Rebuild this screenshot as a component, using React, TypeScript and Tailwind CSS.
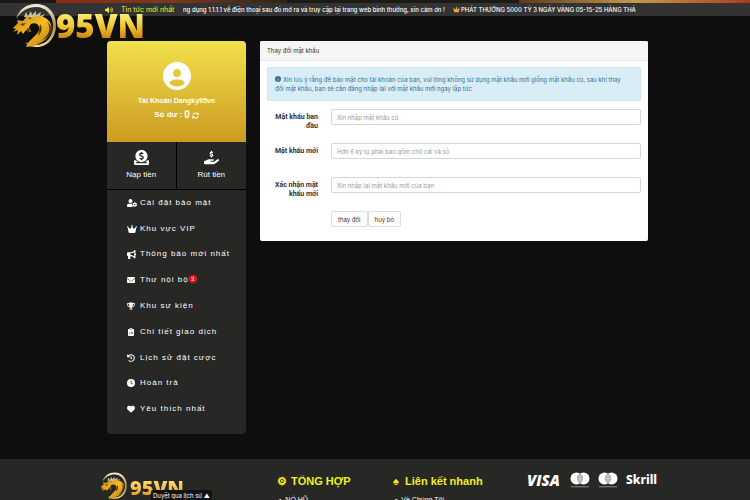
import type { ReactNode } from 'react';
import {
  FaArrowsRotate,
  FaBullhorn,
  FaCircleInfo,
  FaCircleUser,
  FaClipboardList,
  FaClock,
  FaCrown,
  FaEnvelope,
  FaHandHoldingDollar,
  FaHeart,
  FaTrophy,
  FaVolumeHigh,
} from 'react-icons/fa6';
import { FaDonate, FaHistory, FaUserCog } from 'react-icons/fa';

interface MenuItem {
  label: string;
  icon: ReactNode;
  badge?: number;
}

const menuItems: MenuItem[] = [
  { label: 'Cài đặt bảo mật', icon: <FaUserCog size={10} /> },
  { label: 'Khu vực VIP', icon: <FaCrown size={10} /> },
  { label: 'Thông báo mới nhất', icon: <FaBullhorn size={9} /> },
  { label: 'Thư nội bộ', icon: <FaEnvelope size={8} />, badge: 3 },
  { label: 'Khu sự kiện', icon: <FaTrophy size={8} /> },
  { label: 'Chi tiết giao dịch', icon: <FaClipboardList size={8} /> },
  { label: 'Lịch sử đặt cược', icon: <FaHistory size={8} /> },
  { label: 'Hoàn trả', icon: <FaClock size={8} /> },
  { label: 'Yêu thích nhất', icon: <FaHeart size={8} /> },
];

const fields = [
  { id: 'old-password', label: 'Mật khẩu ban đầu', placeholder: 'Xin nhập mật khẩu cũ' },
  { id: 'new-password', label: 'Mật khẩu mới', placeholder: 'Hơn 6 ký tự phải bao gồm chữ cái và số' },
  { id: 'confirm-password', label: 'Xác nhận mật khẩu mới', placeholder: 'Xin nhập lại mật khẩu mới của bạn' },
];

function DragonMark({ id, className }: { id: string; className: string }) {
  return (
    <svg viewBox="0 0 46 46" className={className} aria-hidden="true">
      <defs>
        <linearGradient id={`${id}-ring`} x1="0" y1="0" x2="0" y2="1">
          <stop offset="0" stopColor="#f4f0e2" />
          <stop offset="0.5" stopColor="#a98d4c" />
          <stop offset="1" stopColor="#f3dd9a" />
        </linearGradient>
        <linearGradient id={`${id}-body`} x1="0" y1="0" x2="1" y2="1">
          <stop offset="0" stopColor="#c98a1a" />
          <stop offset="0.5" stopColor="#f5bd22" />
          <stop offset="1" stopColor="#b87410" />
        </linearGradient>
      </defs>
      {/* crescent ring, thicker on the right */}
      <path
        d="M4 16C7 6 15 1 24 1c12 0 20 9 20 21s-8 22-19 22c-5 0-9-1-12-5 3 2 6 3 10 3 11 0 18-8 18-19S34 4 24 4C16 4 9 8 4 16z"
        fill={`url(#${id}-ring)`}
      />
      {/* horns and mane */}
      <path d="M12 14l2-5 2 4 3-5 1 4 4-4v4l5-3-1 4 5-2-4 5-8-1z" fill="#c9bf9f" />
      {/* head, back and tail */}
      <path
        d="M1 25l5-5-1-3 6 1 4-5 3 3c5-4 12-4 17 0 6 5 6 12 1 18-3 4-8 6-14 9l-8 1c2-7 11-11 13-17 1-5-3-8-8-6l-2 3 2 5-5-2-3 4-2-3-4 4 1-5-5 2 3-3z"
        fill={`url(#${id}-body)`}
      />
      <path d="M8 21l6-1-3 3zM15 25l4 1-4 4zM28 21c3 4 2 8-2 12z" fill="#5c3d0a" />
      <path d="M35 19c5 6 2 13-5 18 11-4 13-12 5-18z" fill="#4b330c" />
    </svg>
  );
}

function Mastercard() {
  return (
    <svg viewBox="0 0 20 16" className="h-4 w-5 shrink-0" role="img" aria-label="Mastercard">
      <circle cx="6.5" cy="6.5" r="6" fill="#fff" />
      <circle cx="13.5" cy="6.5" r="6" fill="#fff" />
      <path d="M10 1.6a6 6 0 0 1 0 9.8a6 6 0 0 1 0-9.8z" fill="#c4c4c1" stroke="#777774" strokeWidth=".6" />
      <path d="M1 14.8h18" stroke="#8a8a87" />
    </svg>
  );
}

function NewsBar() {
  return (
    <div className="flex h-[13px] shrink-0 items-center overflow-hidden bg-[#333] pr-[94px] pl-[105px] leading-[11px] whitespace-nowrap">
      <FaVolumeHigh size={8} className="shrink-0 text-[#e8e82a]" />
      <span className="ml-2 w-[62px] shrink-0 font-[Inter] text-[7px] text-[#f0ee20]">Tin tức mới nhất</span>
      <div className="flex min-w-0 flex-1 items-center gap-2 overflow-hidden font-[Inter] text-[6px] font-medium text-white">
        <span>ng dụng 1.1.1.1 về điện thoại sau đó mở ra và truy cập lại trang web bình thường, xin cảm ơn !</span>
        <span className="flex items-center">
          <FaCrown size={7} className="mr-px shrink-0 text-[#f0a445]" />
          PHÁT THƯỞNG 5000 TỶ 3 NGÀY VÀNG 05-15-25 HÀNG THÁ
        </span>
      </div>
    </div>
  );
}

function Sidebar() {
  return (
    <aside className="w-[139px] shrink-0 overflow-hidden rounded-[4px] bg-[#272725] text-white">
      <div className="flex h-[101px] flex-col items-center bg-linear-to-b from-[#f1e14c] to-[#cb9b1f] pt-[21px]">
        <FaCircleUser size={28} />
        <p className="mt-1.5 text-[7px] leading-[9px] font-bold">Tài Khoản Dangky95vn</p>
        <p className="mt-1 flex items-center gap-0.5 text-[8px] leading-3 font-bold">
          Số dư : <span className="text-[10px]">0</span>
          <button type="button" aria-label="Làm mới">
            <FaArrowsRotate size={7} />
          </button>
        </p>
      </div>
      <div className="grid h-12 grid-cols-2 border-b border-black text-[8px]">
        <a href="#deposit" className="flex flex-col items-center border-r border-black pt-2 leading-3">
          <FaDonate size={15} />
          <span className="mt-1">Nạp tiền</span>
        </a>
        <a href="#withdraw" className="flex flex-col items-center pt-2 leading-3">
          <FaHandHoldingDollar size={15} />
          <span className="mt-1">Rút tiền</span>
        </a>
      </div>
      <ul className="mb-3 flex h-[232px] flex-col pl-5 text-[8px] tracking-[1px]">
        {menuItems.map((item) => (
          <li key={item.label} className="flex flex-1 items-center">
            <a href="#menu" className="flex items-center whitespace-nowrap">
              <span className="flex w-[13px] shrink-0">{item.icon}</span>
              {item.label}
            </a>
            {item.badge && (
              <span className="mb-0.5 flex size-2 items-center justify-center rounded-full bg-[#ee1111] text-[6px] tracking-normal">
                {item.badge}
              </span>
            )}
          </li>
        ))}
      </ul>
    </aside>
  );
}

function PasswordPanel() {
  return (
    <section className="min-w-0 flex-1 overflow-hidden rounded-[2px] bg-white font-[Inter] text-[6px] leading-[9px] text-[#333]">
      <h1 className="flex h-5 items-center border-b border-[#e6e6e6] bg-[#f5f5f5] px-[7px]">Thay đổi mật khẩu</h1>
      <div className="px-[7px] pt-1.5 pb-[14px]">
        <p className="h-[34px] rounded-[2px] border border-[#cfe9f3] bg-[#d9edf7] pt-[7px] pr-3 pl-[7px] text-[#31708f]">
          <FaCircleInfo size={6} className="mr-0.5 inline align-baseline" />
          Xin lưu ý rằng để bảo mật cho tài khoản của bạn, vui lòng không sử dụng mật khẩu mới giống mật khẩu cũ, sau
          khi thay đổi mật khẩu, bạn sẽ cần đăng nhập lại với mật khẩu mới ngay lập tức
        </p>
        <form className="mt-2">
          {fields.map((field) => (
            <div key={field.id} className="flex h-[34px] items-start">
              <label htmlFor={field.id} className="mr-[13px] w-[51px] pt-1 text-right font-[Roboto] text-[7px] leading-[9px] font-bold">
                {field.label}
              </label>
              <input
                id={field.id}
                type="password"
                placeholder={field.placeholder}
                className="h-4 min-w-0 flex-1 rounded-[2px] border border-[#d5d5d5] px-[5px] placeholder:text-[#999]"
              />
            </div>
          ))}
          <div className="ml-16 flex">
            <button type="submit" className="h-4 rounded-[2px] border border-[#ddd] px-1.5">
              thay đổi
            </button>
            <button type="reset" className="h-4 rounded-[2px] border border-[#ddd] px-1.5">
              huỷ bỏ
            </button>
          </div>
        </form>
      </div>
    </section>
  );
}

function Footer() {
  return (
    <footer className="relative flex min-h-[60px] shrink-0 bg-[#272725] pt-[13px] pl-[100px] text-white">
      <div className="flex w-[177px] shrink-0 items-start">
        <DragonMark id="footer" className="size-[28px]" />
        <span className="mt-1 ml-0.5 bg-linear-to-b from-[#fff07c] to-[#dd8b12] bg-clip-text font-['Open_Sans'] text-[20px] leading-6 font-extrabold text-transparent">
          95VN
        </span>
      </div>
      <div className="w-[116px] shrink-0">
        <h2 className="mt-[3px] flex gap-1 text-[11px] leading-3 font-bold whitespace-nowrap text-[#f2ef21]">
          <span>⚙</span>TỔNG HỢP
        </h2>
        <a href="#slots" className="mt-2 ml-0.5 block text-[7px] leading-[9px]">•&nbsp; NỔ HŨ</a>
      </div>
      <div className="w-[134px] shrink-0">
        <h2 className="mt-[3px] flex gap-1 text-[11px] leading-3 font-bold whitespace-nowrap text-[#f2ef21]">
          <span className="w-2">♠</span>Liên kết nhanh
        </h2>
        <a href="#about" className="mt-2 ml-0.5 block text-[7px] leading-[9px]">•&nbsp; Về Chúng Tôi</a>
      </div>
      <div className="flex h-4 items-center gap-2">
        <span className="w-[35px] font-['Open_Sans'] text-[15px] leading-4 font-extrabold italic">VISA</span>
        <Mastercard />
        <Mastercard />
        <span className="font-['Noto_Sans'] text-[12px] leading-4 font-extrabold">Skrill</span>
      </div>
      <button
        type="button"
        className="absolute top-[31px] left-[151px] rounded-t-[2px] bg-[#111] px-0.5 font-[Inter] text-[6px] leading-[11px] whitespace-nowrap"
      >
        Duyệt qua lịch sử ▲
      </button>
    </footer>
  );
}

export default function App() {
  return (
    <div className="relative flex h-screen flex-col overflow-hidden bg-[#0e0e0e] font-['Liberation_Sans',Arial,sans-serif]">
      {/* lower edge of the promo banner */}
      <div className="flex h-[3px] shrink-0">
        <div className="w-14 bg-[#191919]" />
        <div className="flex-1 bg-linear-to-r from-[#8c2a14] via-[#7a3a18] to-[#2c2416]" />
        <div className="flex-1 bg-[#1b1a15]" />
        <div className="flex-1 bg-linear-to-r from-[#5f3b1c] via-[#c39a4b] to-[#a83a1c]" />
      </div>
      <NewsBar />
      <a href="#home" className="absolute top-[3px] left-3 flex items-center" aria-label="95VN">
        <DragonMark id="header" className="size-[46px]" />
        <span className="-ml-0.5 bg-linear-to-b from-[#fff07c] via-[#f0c730] to-[#c87810] bg-clip-text font-['Open_Sans'] text-[33px] leading-[28px] font-extrabold text-transparent">
          95VN
        </span>
      </a>
      <main className="flex shrink-0 items-start gap-[14px] pt-[25px] pr-[102px] pb-[25px] pl-[107px]">
        <Sidebar />
        <PasswordPanel />
      </main>
      <Footer />
    </div>
  );
}
